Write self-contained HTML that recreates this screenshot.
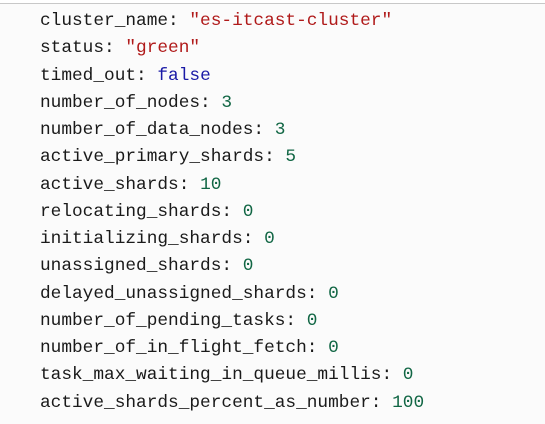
<!DOCTYPE html>
<html><head><style>
html,body{margin:0;padding:0;width:545px;height:424px;overflow:hidden;background:#fff;}
.top{position:absolute;left:0;top:0;width:545px;height:3px;background:#fff;border-bottom:1px solid #c8c8c8;}
.box{position:absolute;left:0;top:4px;width:545px;height:420px;background:#fbfbfb;}
pre{position:absolute;left:40px;top:8px;margin:0;font-family:"Liberation Mono",monospace;font-size:17.8px;line-height:27.25px;color:#1a1a1a;}
.s{color:#b01a1a}.b{color:#1a1aa6}.n{color:#116644}
</style></head><body>
<div class="box"></div><div class="top"></div>
<pre>cluster_name: <span class="s">"es-itcast-cluster"</span>
status: <span class="s">"green"</span>
timed_out: <span class="b">false</span>
number_of_nodes: <span class="n">3</span>
number_of_data_nodes: <span class="n">3</span>
active_primary_shards: <span class="n">5</span>
active_shards: <span class="n">10</span>
relocating_shards: <span class="n">0</span>
initializing_shards: <span class="n">0</span>
unassigned_shards: <span class="n">0</span>
delayed_unassigned_shards: <span class="n">0</span>
number_of_pending_tasks: <span class="n">0</span>
number_of_in_flight_fetch: <span class="n">0</span>
task_max_waiting_in_queue_millis: <span class="n">0</span>
active_shards_percent_as_number: <span class="n">100</span></pre>
</body></html>
